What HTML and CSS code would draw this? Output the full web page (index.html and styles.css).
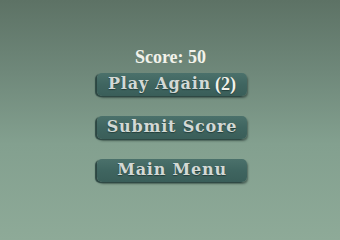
FILE: index.html
```html
<!DOCTYPE html>
<html>
<head>
<meta charset="utf-8">
<link rel="stylesheet" href="styles.css">
</head>
<body>
<main class="screen">
  <div class="score">Score: 50</div>
  <div class="menu">
    <button class="btn">Play Again <span class="count">(2)</span></button>
    <button class="btn">Submit Score</button>
    <button class="btn">Main Menu</button>
  </div>
</main>
</body>
</html>
```
FILE: styles.css
```css
html {
  margin: 0;
  padding: 0;
  height: 100%;
  background: linear-gradient(to bottom, #5d7265 0%, #6f887a 30%, #83a08f 60%, #8eaa98 100%);
}
body {
  margin: 0;
  padding: 0;
  height: 100%;
  overflow: hidden;
  font-family: "DejaVu Serif", serif;
}
.screen {
  display: flex;
  flex-direction: column;
  align-items: center;
  padding-top: 47px;
}
.score {
  font-family: "Liberation Serif", serif;
  font-weight: bold;
  font-size: 18px;
  line-height: 20px;
  color: #f2f2ea;
  margin-bottom: 6px;
  margin-left: 1px;
}
.menu {
  display: flex;
  flex-direction: column;
  gap: 20px;
  margin-left: 4px;
}
.btn {
  box-sizing: border-box;
  width: 150px;
  height: 23px;
  padding: 0 0 2px 0;
  border: none;
  border-radius: 5px;
  background: linear-gradient(to bottom, #4b716b 0%, #3f6560 50%, #3a5e59 100%);
  box-shadow: -2px 1px 1px #2c4642, 1px 2px 2px rgba(30, 50, 45, 0.55);
  color: #d3d9d5;
  font-family: "DejaVu Serif", serif;
  font-weight: bold;
  font-size: 16px;
  letter-spacing: 0.8px;
  line-height: 20px;
  text-shadow: 0 1px 1px rgba(20, 40, 36, 0.6);
  display: flex;
  justify-content: center;
  align-items: center;
  white-space: nowrap;
}
.count {
  font-family: "Liberation Serif", serif;
  font-size: 18px;
  color: #f2f2ea;
  margin-left: 4px;
  letter-spacing: 0;
}
```
